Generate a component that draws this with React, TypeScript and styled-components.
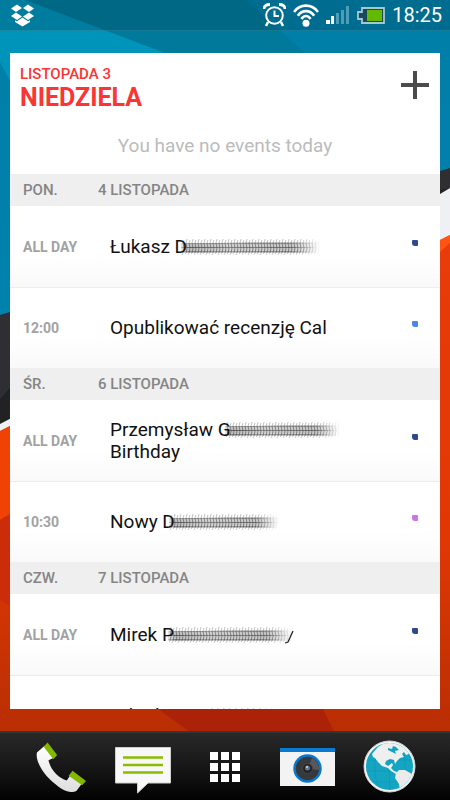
import React, { useId } from "react";
import styled, { createGlobalStyle } from "styled-components";

const GlobalStyle = createGlobalStyle`
  *, *::before, *::after { box-sizing: border-box; }
  body { margin: 0; background: #0a0a0a; font-family: Roboto, "Liberation Sans", sans-serif; }
  button { font: inherit; color: inherit; background: none; border: 0; padding: 0; cursor: pointer; }
  h1, h2, p, ul { margin: 0; padding: 0; }
  ul { list-style: none; }
  svg { display: block; }
`;

const Screen = styled.div`
  position: relative;
  isolation: isolate;
  display: flex;
  flex-direction: column;
  height: 100vh;
  overflow: hidden;
`;

const WallpaperArt = styled.svg`
  position: absolute;
  inset: 0;
  width: 100%;
  height: 100%;
  z-index: -1;
`;

const StatusBar = styled.header`
  display: flex;
  flex: none;
  align-items: center;
  justify-content: space-between;
  height: 31px;
  padding: 0 8px 0 10px;
  color: #fff;
  background: rgba(0, 40, 55, 0.22);
  border-bottom: 1px solid rgba(90, 170, 190, 0.25);
`;

const StatusIcons = styled.div`
  display: flex;
  align-items: center;
  gap: 7px;
`;

const Clock = styled.time`
  font-size: 20px;
  line-height: 30px;
`;

const Main = styled.main`
  display: flex;
  flex: 1;
  min-height: 0;
  padding: 22px 10px;
`;

const Widget = styled.section`
  flex: 1;
  min-width: 0;
  overflow: hidden;
  background: #fff;
`;

const TodayHeader = styled.header`
  display: flex;
  justify-content: space-between;
  padding: 12px 10px 0;
  color: #fb3434;
`;

const TodayDate = styled.p`
  font-size: 15px;
  font-weight: 500;
  line-height: 18px;
`;

const TodayName = styled.h1`
  font-size: 25px;
  font-weight: 700;
  line-height: 30px;
`;

const AddButton = styled.button`
  width: 30px;
  height: 40px;
  display: grid;
  place-items: center;
`;

const EmptyNote = styled.p`
  height: 61px;
  padding-top: 21px;
  font-size: 19px;
  line-height: 24px;
  text-align: center;
  color: #bbb;
`;

const DayHeading = styled.h2`
  display: grid;
  grid-template-columns: 75px 1fr;
  align-items: center;
  height: 32px;
  padding: 0 13px;
  font-size: 15px;
  font-weight: 500;
  color: #858585;
  background: #efefef;
`;

const EventRow = styled.li`
  display: grid;
  grid-template-columns: 87px 1fr 6px;
  align-items: center;
  height: 81px;
  padding: 0 22px 0 13px;
  background: linear-gradient(#fff 60%, #f9f9f9);

  & + & { border-top: 1px solid #ececec; }
`;

const EventTime = styled.span`
  font-size: 14px;
  font-weight: 700;
  color: #a2a2a2;
`;

const EventTitle = styled.div`
  font-size: 19px;
  line-height: 22px;
  color: #111;
`;

const NameLine = styled.div`
  display: flex;
  height: 22px;
  white-space: pre;
`;

const Smudge = styled.svg`
  flex: none;
  margin-left: -8px;
`;

const CalendarDot = styled.span<{ $color: string }>`
  width: 6px;
  height: 6px;
  margin-bottom: 8px;
  border-radius: 1px 1px 1px 3px;
  background: ${({ $color }) => $color};
`;

const Dock = styled.nav`
  display: grid;
  flex: none;
  grid-template-columns: repeat(5, 1fr);
  align-items: center;
  height: 69px;
  padding: 0 20px;
  border-top: 2px solid #353535;
  background: linear-gradient(#282828, #171717 50%, #020202);
`;

const DockButton = styled.button`
  display: grid;
  place-items: center;
  height: 66px;
`;

function Wallpaper() {
  return (
    <WallpaperArt viewBox="0 0 450 800" preserveAspectRatio="none" aria-hidden="true">
      <defs>
        <linearGradient id="ember" x1="0" y1="240" x2="0" y2="732" gradientUnits="userSpaceOnUse">
          <stop offset="0" stopColor="#e83c0a" />
          <stop offset="0.6" stopColor="#e03804" />
          <stop offset="1" stopColor="#b92e03" />
        </linearGradient>
        <linearGradient id="sea" x1="0" y1="50" x2="0" y2="310" gradientUnits="userSpaceOnUse">
          <stop offset="0" stopColor="#007fa9" />
          <stop offset="1" stopColor="#0082ad" />
        </linearGradient>
      </defs>
      <path d="M0 0H450V400H0Z" fill="url(#sea)" />
      <path d="M25 0H245L305 53H165Z" fill="#00799a" />
      <path d="M0 0H25L165 53L20 100L0 62Z" fill="#0094bb" />
      <path d="M0 315L10 312L440 171L450 168V189L10 387L0 398Z" fill="#2e2e33" />
      <path d="M0 398L10 387L440 190L450 188V240L0 425Z" fill="#222224" />
      <path d="M0 424L440 194L450 188V238L0 434Z" fill="#eef0f3" />
      <path d="M0 431L10 426L440 240L450 235V800H0Z" fill="url(#ember)" />
      <path d="M440 240L450 235V243L440 252Z" fill="#ff5511" />
      <path d="M0 431L10 426L100 390V480L10 514L0 520Z" fill="#f04205" />
      <path d="M0 520L10 514L60 500V640L10 606L0 600Z" fill="#cd2c0b" />
      <path d="M150 703L158 709L190 732H334L323 709L318 700Z" fill="#ab2208" />
    </WallpaperArt>
  );
}

function DropboxIcon() {
  return (
    <svg width="25" height="23" viewBox="0 0 25 23" fill="#fff" aria-hidden="true">
      <path d="M7 0.500L12 4L6 8L1 4.500Z" />
      <path d="M18 0.500L24 4.500L19 8L13 4Z" />
      <path d="M6 8.500L12 12.500L7 16L1 12Z" />
      <path d="M19 8.500L24 12L18 16L13 12.500Z" />
      <path d="M12.500 13.500L18 17.200L20 16.200V18L12.500 22.500L5 18V16.200L7 17.200Z" />
    </svg>
  );
}

function AlarmIcon() {
  return (
    <svg width="23" height="24" viewBox="0 0 23 24" fill="none" stroke="#fff" strokeWidth="2" aria-hidden="true">
      <circle cx="11.500" cy="12.500" r="8.300" />
      <path d="M11.500 7.500V13H16" />
      <path d="M5 19L3 23M18 19L20 23" strokeWidth="2.500" />
      <path d="M1 6C1 3 3 1.500 7 1.500M22 6C22 3 20 1.500 16 1.500" strokeWidth="2.800" />
    </svg>
  );
}

function WifiIcon() {
  return (
    <svg width="26" height="23" viewBox="0 0 26 23" fill="none" stroke="#fff" strokeWidth="2.600" aria-hidden="true">
      <path d="M1 8C7 -0.500 19 -0.500 25 8" />
      <path d="M4.800 11.800C9 5.500 17 5.500 21.200 11.800" />
      <path d="M8.500 15C11 11 15 11 17.500 15" />
      <circle cx="13" cy="19.300" r="3.500" fill="#fff" stroke="none" />
    </svg>
  );
}

function SignalIcon() {
  return (
    <svg width="24" height="18" viewBox="0 0 24 18" aria-hidden="true">
      <path d="M0 14H4V18H0ZM5 10H8V18H5Z" fill="#fff" />
      <path d="M10 7H13V18H10ZM15 4H18V18H15ZM20 0H23V18H20Z" fill="#4f9db5" />
    </svg>
  );
}

function BatteryIcon() {
  return (
    <svg width="28" height="17" viewBox="0 0 28 17" aria-hidden="true">
      <path d="M5 1H27V16H5V12H1V5H5Z" fill="#174a5a" stroke="#a9c5cd" strokeWidth="1.800" />
      <rect x="10" y="3" width="15" height="11" fill="#62b900" />
    </svg>
  );
}

type Stroke = { width: number; seed: number; tail?: boolean };

function SmudgedName({ width, seed, tail }: Stroke) {
  const id = useId().replace(/[^a-zA-Z0-9]/g, "");
  const count = Math.floor((width - 6) / 3);
  return (
    <Smudge width={width} height="22" viewBox={`0 0 ${width} 22`} aria-hidden="true">
      <defs>
        <linearGradient id={`f${id}`}>
          <stop offset="0" stopColor="#000" stopOpacity="0.3" />
          <stop offset="0.06" stopColor="#000" stopOpacity="0.8" />
          <stop offset="0.35" stopColor="#000" stopOpacity="0.55" />
          <stop offset="0.8" stopColor="#000" stopOpacity="0.7" />
          <stop offset="1" stopColor="#000" stopOpacity="0" />
        </linearGradient>
        <filter id={`b${id}`} x="-5%" y="-30%" width="110%" height="160%">
          <feGaussianBlur stdDeviation="0.5" />
        </filter>
      </defs>
      <g filter={`url(#b${id})`} fill={`url(#f${id})`}>
        <path d={`M2 8L${width * 0.5} 6L${width - 4} 6L${width - 7} 17H2Z`} opacity="0.32" />
        <path d={`M2 7H${width - 10}V8H2Z`} opacity="0.4" />
        <path d={`M2 11H${width - 6}V12H2Z`} opacity="0.6" />
        <path d={`M2 15H${width - 10}V16H2Z`} opacity="0.4" />
      </g>
      <g filter={`url(#b${id})`} stroke="#222" fill="none">
        {Array.from({ length: count }, (_, i) => {
          const x = 4 + i * 3;
          const fade = Math.min(1, (count - i) / 8);
          const lift = (i * 5 + seed) % 4;
          return (
            <g key={i} opacity={fade}>
              <path d={`M${x + 1} ${3 + (lift % 2)}L${x} 7`} opacity="0.28" />
              <path d={`M${x} 7Q${x + 2} 12 ${x} 17`} opacity="0.42" />
              <path d={`M${x} 17L${x - 1} ${18 + (lift % 2)}`} opacity="0.25" />
            </g>
          );
        })}
        {tail && <path d={`M${width - 3} 7L${width - 8} 18L${width - 11} 19`} strokeWidth="1.300" />}
      </g>
    </Smudge>
  );
}

function PhoneIcon() {
  return (
    <svg width="50" height="50" viewBox="0 0 52 52" aria-hidden="true">
      <defs>
        <linearGradient id="handset" x2="0" y2="1">
          <stop stopColor="#fff" />
          <stop offset="1" stopColor="#dedede" />
        </linearGradient>
      </defs>
      <path d="M9 4L1 11C-1 20 8 34 19 43C27 50 35 54 42 51L48 43L36 34L32 40C24 38 15 29 13 19L19 16Z" fill="url(#handset)" />
      <path d="M12 0.500L22 13.500L18 18L8 5Z" fill="#83b800" />
      <path d="M38 30L52 40.500L48 45L34 35Z" fill="#83b800" />
    </svg>
  );
}

function MessageIcon() {
  return (
    <svg width="56" height="56" viewBox="0 -8 56 56" aria-hidden="true">
      <path d="M0.500 0.500H55.500V36H33L22.500 46V36H0.500Z" fill="#f8f8f8" stroke="#cfcfcf" />
      <path d="M8 10.500H48M8 18H48M8 25.500H48" stroke="#8cbc00" strokeWidth="2.500" />
    </svg>
  );
}

function AppsIcon() {
  return (
    <svg width="30" height="30" viewBox="0 0 30 30" fill="#fff" aria-hidden="true">
      {[0, 11, 22].map((y) => [0, 11, 22].map((x) => <rect key={`${x}-${y}`} x={x} y={y} width="8" height="8" />))}
    </svg>
  );
}

function CameraIcon() {
  return (
    <svg width="55" height="38" viewBox="0 0 55 38" aria-hidden="true">
      <rect width="55" height="38" fill="#f3f3f3" />
      <rect width="55" height="4" fill="#087bd0" />
      <circle cx="27.500" cy="20.500" r="13" fill="#38393d" stroke="#0878cc" strokeWidth="2.500" />
      <path d="M27.500 20.500L32 10A12 12 0 0 1 39 22Z" fill="#57585c" />
      <circle cx="27.500" cy="20.500" r="5" fill="#222326" stroke="#46474b" />
      <circle cx="27.500" cy="20" r="2.500" fill="#65758a" />
      <circle cx="27" cy="19" r="1" fill="#ccd8e5" />
    </svg>
  );
}

function GlobeIcon() {
  return (
    <svg width="53" height="53" viewBox="0 0 53 53" aria-hidden="true">
      <defs>
        <clipPath id="globe"><circle cx="26.500" cy="26.500" r="23.500" /></clipPath>
      </defs>
      <circle cx="26.500" cy="26.500" r="25.500" fill="#f6f6f6" stroke="#d5d5d5" />
      <circle cx="26.500" cy="26.500" r="23.500" fill="#14a5c3" />
      <g clipPath="url(#globe)">
        <path d="M3 20H51M3 31H51M7 42H47M26.500 3V51M17 4Q6 27 17 50M37 4Q48 27 37 50" fill="none" stroke="#0f93b2" strokeWidth="0.600" />
        <path d="M9 14L15 7L23 2L32 3L38 6L43 9L46 14L43 15L41 12L39 14L41 17L37 18L34 21L32 24L31 20L27 19L23 21L22 24L25 26L29 23L30 25L28 28L31 31L34 32L33 34L28 31L25 28L19 26L15 22L12 18L10 17Z" fill="#efefef" />
        <path d="M33 33L36 30L42 30L49 34L51 40L42 49L37 51L36 44L32 38Z" fill="#ebebeb" />
        <path d="M25 8L29 9L30 6L33 7L36 10L32 11L33 14L29 12L25 10Z" fill="#14a5c3" />
      </g>
    </svg>
  );
}

type EventItem = {
  time: string;
  title: string;
  more?: string;
  color: string;
  smudge?: Stroke;
};

const days: { day: string; date: string; events: EventItem[] }[] = [
  {
    day: "PON.",
    date: "4 LISTOPADA",
    events: [
      { time: "ALL DAY", title: "Łukasz D", color: "#2f4a8c", smudge: { width: 144, seed: 1 } },
      { time: "12:00", title: "Opublikować recenzję Cal", color: "#4986e7" },
    ],
  },
  {
    day: "ŚR.",
    date: "6 LISTOPADA",
    events: [
      { time: "ALL DAY", title: "Przemysław G", more: "Birthday", color: "#2f4a8c", smudge: { width: 120, seed: 2 } },
      { time: "10:30", title: "Nowy D", color: "#cd74e6", smudge: { width: 116, seed: 3 } },
    ],
  },
  {
    day: "CZW.",
    date: "7 LISTOPADA",
    events: [
      { time: "ALL DAY", title: "Mirek P", color: "#2f4a8c", smudge: { width: 130, seed: 4, tail: true } },
      { time: "", title: "Arkadiusz G", color: "transparent", smudge: { width: 80, seed: 5 } },
    ],
  },
];

export default function App() {
  return (
    <Screen>
      <GlobalStyle />
      <Wallpaper />
      <StatusBar>
        <DropboxIcon />
        <StatusIcons>
          <AlarmIcon />
          <WifiIcon />
          <SignalIcon />
          <BatteryIcon />
          <Clock>18:25</Clock>
        </StatusIcons>
      </StatusBar>
      <Main>
        <Widget aria-label="Agenda">
          <TodayHeader>
            <div>
              <TodayDate>LISTOPADA 3</TodayDate>
              <TodayName>NIEDZIELA</TodayName>
            </div>
            <AddButton type="button" aria-label="Add event">
              <svg width="28" height="28" viewBox="0 0 28 28" stroke="#4b4b4b" strokeWidth="4" aria-hidden="true">
                <path d="M14 0V28M0 14H28" />
              </svg>
            </AddButton>
          </TodayHeader>
          <EmptyNote>You have no events today</EmptyNote>
          {days.map(({ day, date, events }) => (
            <section key={day}>
              <DayHeading>
                <span>{day}</span>
                <span>{date}</span>
              </DayHeading>
              <ul>
                {events.map((event) => (
                  <EventRow key={event.title}>
                    <EventTime>{event.time}</EventTime>
                    <EventTitle>
                      <NameLine>
                        {event.title}
                        {event.smudge && <SmudgedName {...event.smudge} />}
                      </NameLine>
                      {event.more}
                    </EventTitle>
                    <CalendarDot $color={event.color} />
                  </EventRow>
                ))}
              </ul>
            </section>
          ))}
        </Widget>
      </Main>
      <Dock aria-label="Dock">
        <DockButton type="button" aria-label="Phone"><PhoneIcon /></DockButton>
        <DockButton type="button" aria-label="Messages"><MessageIcon /></DockButton>
        <DockButton type="button" aria-label="All apps"><AppsIcon /></DockButton>
        <DockButton type="button" aria-label="Camera"><CameraIcon /></DockButton>
        <DockButton type="button" aria-label="Browser"><GlobeIcon /></DockButton>
      </Dock>
    </Screen>
  );
}
